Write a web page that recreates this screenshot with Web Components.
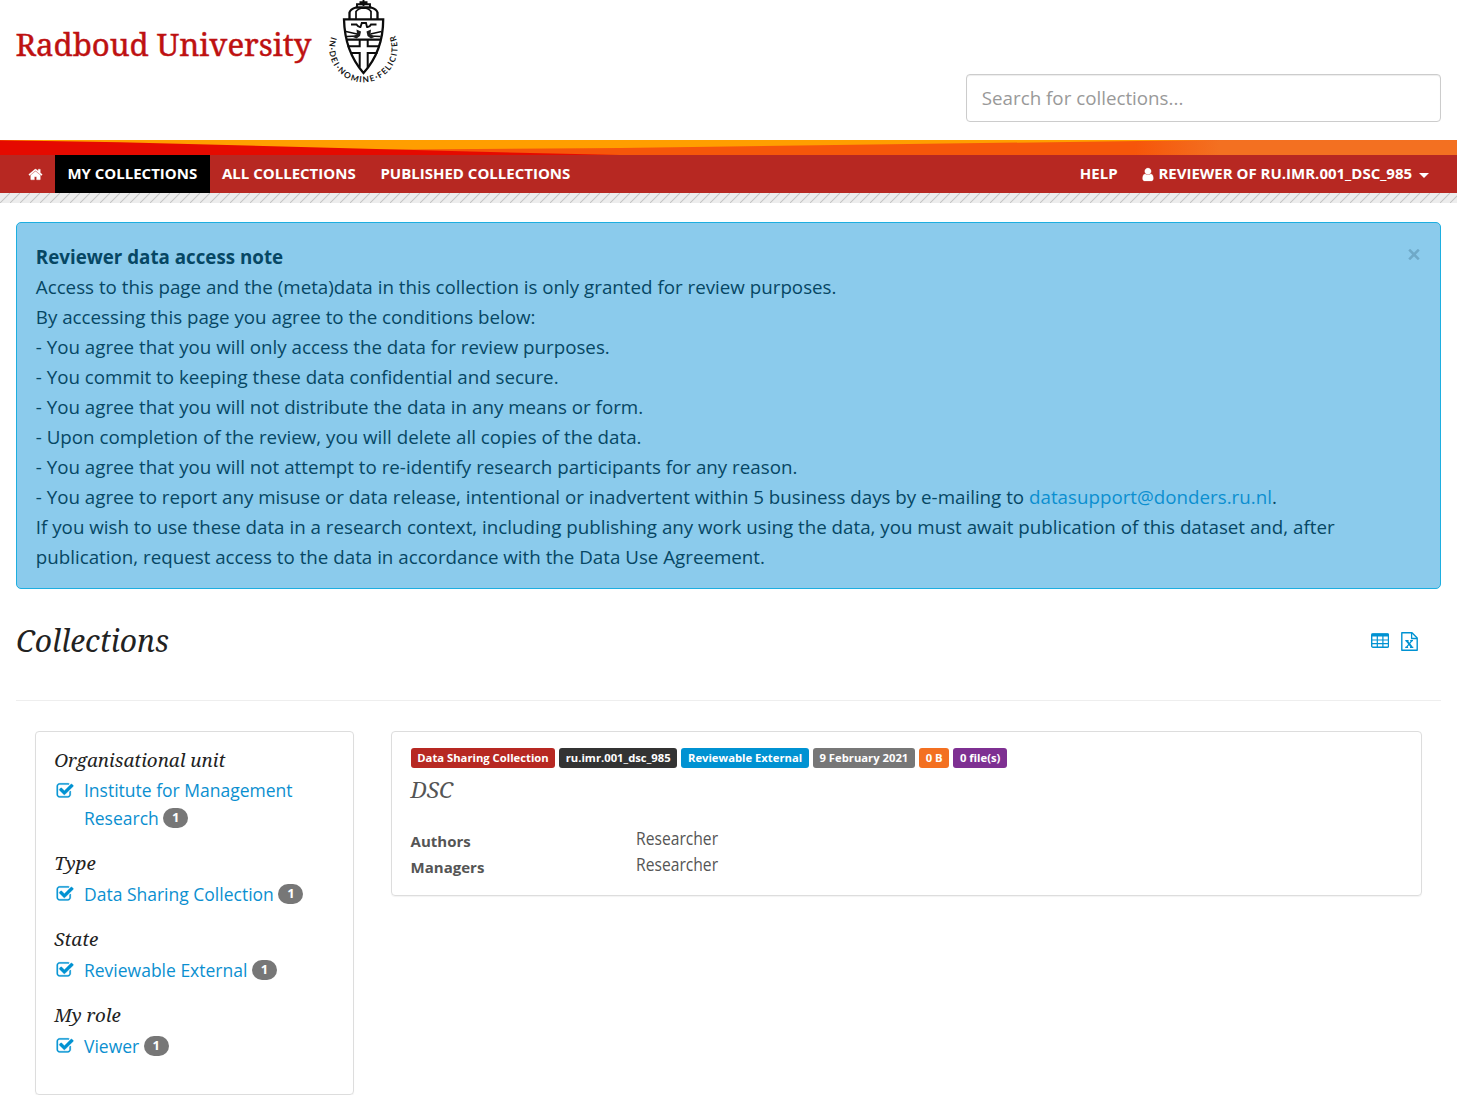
<!DOCTYPE html>
<html lang="en">
<head>
<meta charset="utf-8">
<title>Collections</title>
<style>
html,body{margin:0;padding:0;background:#fff}
body{font-family:"Open Sans","Noto Sans",sans-serif;font-size:18.75px;color:#222}
</style>
</head>
<body>
<page-shell>
  <site-header slot="header"></site-header>
  <site-nav slot="nav"></site-nav>
  <alert-box>
    <b>Reviewer data access note</b><br>
    Access to this page and the (meta)data in this collection is only granted for review purposes.<br>
    By accessing this page you agree to the conditions below:<br>
    - You agree that you will only access the data for review purposes.<br>
    - You commit to keeping these data confidential and secure.<br>
    - You agree that you will not distribute the data in any means or form.<br>
    - Upon completion of the review, you will delete all copies of the data.<br>
    - You agree that you will not attempt to re-identify research participants for any reason.<br>
    - You agree to report any misuse or data release, intentional or inadvertent within 5 business days by e-mailing to <span style="color:#0b8fd0">datasupport@donders.ru.nl</span>.<br>
    If you wish to use these data in a research context, including publishing any work using the data, you must await publication of this dataset and, after<br>
    publication, request access to the data in accordance with the Data Use Agreement.
  </alert-box>
  <page-heading>Collections</page-heading>
  <results-layout>
    <facet-panel slot="side">
      <facet-group name="Organisational unit" count="1">Institute for Management Research</facet-group>
      <facet-group name="Type" count="1">Data Sharing Collection</facet-group>
      <facet-group name="State" count="1">Reviewable External</facet-group>
      <facet-group name="My role" count="1">Viewer</facet-group>
    </facet-panel>
    <collection-card name="DSC">
      <tag-label slot="tags" style="--c:#b72822;--p:6.3px">Data Sharing Collection</tag-label>
      <tag-label slot="tags" style="--c:#333">ru.imr.001_dsc_985</tag-label>
      <tag-label slot="tags" style="--c:#0092d2">Reviewable External</tag-label>
      <tag-label slot="tags" style="--c:#777">9 February 2021</tag-label>
      <tag-label slot="tags" style="--c:#f37021">0 B</tag-label>
      <tag-label slot="tags" style="--c:#7e3092">0 file(s)</tag-label>
      <meta-row name="Authors">Researcher</meta-row>
      <meta-row name="Managers">Researcher</meta-row>
    </collection-card>
  </results-layout>
</page-shell>
<script>
const define = (name, html) => customElements.define(name, class extends HTMLElement {
  constructor() {
    super();
    this.attachShadow({mode: 'open'});
  }
  connectedCallback() {
    this.shadowRoot.innerHTML = typeof html === 'function' ? html(this) : html;
  }
});

const ICONS = {
  home: 'M1472 992v480q0 26-19 45t-45 19h-384v-384h-256v384h-384q-26 0-45-19t-19-45v-480q0-1 .5-3t.5-3l575-474 575 474q1 2 1 6zm223-69l-62 74q-8 9-21 11h-3q-13 0-21-7l-692-577-692 577q-12 8-24 7-13-2-21-11l-62-74q-8-10-7-23.5t11-21.5l719-599q32-26 76-26t76 26l244 204v-195q0-14 9-23t23-9h192q14 0 23 9t9 23v408l219 182q10 8 11 21.5t-7 23.5z',
  user: 'M1536 1399q0 109-62.5 187t-150.5 78h-854q-88 0-150.5-78t-62.5-187q0-85 8.5-160.5t31.5-152 58.5-131 94-89 134.5-34.5q131 128 313 128t313-128q76 0 134.5 34.5t94 89 58.5 131 31.5 152 8.5 160.5zm-256-887q0 159-112.5 271.5t-271.5 112.5-271.5-112.5-112.5-271.5 112.5-271.5 271.5-112.5 271.5 112.5 112.5 271.5z',
  check: 'M1472 930v318q0 119-84.5 203.5t-203.5 84.5h-832q-119 0-203.5-84.5t-84.5-203.5v-832q0-119 84.5-203.5t203.5-84.5h832q63 0 117 25 15 7 18 23 3 17-9 29l-49 49q-10 10-23 10-3 0-9-2-23-6-45-6h-832q-66 0-113 47t-47 113v832q0 66 47 113t113 47h832q66 0 113-47t47-113v-254q0-13 9-22l64-64q10-10 23-10 6 0 12 3 20 8 20 29zm231-489l-814 814q-24 24-57 24t-57-24l-430-430q-24-24-24-57t24-57l110-110q24-24 57-24t57 24l263 263 647-647q24-24 57-24t57 24l110 110q24 24 24 57t-24 57z'
};

define('fa-icon', el => `
<style>:host{display:inline-block;line-height:0}svg{display:block;width:100%;height:100%}</style>
<svg viewBox="${el.getAttribute('box') || '0 0 1792 1792'}" fill="currentColor" stroke="currentColor" stroke-width="30"><path d="${ICONS[el.getAttribute('name')]}"/></svg>`);

define('page-shell', `
<style>:host{display:block}main{padding:19px 16px 0}</style>
<slot name="header"></slot><slot name="nav"></slot><main><slot></slot></main>`);

define('site-logo', `
<style>
:host{display:flex;height:90px;padding-left:15.500px}
.name{width:304.500px;margin-top:21.500px;font:400 31.200px/44px "Noto Serif",serif;color:#be1111;-webkit-text-stroke:.450px #be1111;white-space:nowrap}
svg{display:block}
</style>
<div class="name">Radboud University</div>
<svg width="84" height="90" viewBox="320 0 84 90">
  <g fill="none" stroke="#0c0c0c" stroke-width="2.300">
    <path d="M344 19.3H383.200C383.200 40 378 57 363.500 73C349.500 57 344.500 40 344 19.3Z"/>
    <path d="M349.500 19V12.500Q350.500 9 356 7.500H371Q376.500 9 377.500 12.500V19"/>
    <path d="M356 19V11.500Q358 8.500 363.500 8Q369.500 8.500 371 11.500V19" stroke-width="1.700"/>
    <path d="M357 7.500V4.200H370V7.500M363.500 0V6M359.500 2.200H367.500" stroke-width="1.900"/>
    <path d="M346 39.700H381" stroke-width="2.200"/>
    <path d="M347.500 46.300H359.700V39.500M380 46.300H367.700V39.500" stroke-width="2"/>
    <path d="M350.500 53H359.700V67.500M377.500 53H367.700V67.500" stroke-width="2"/>
    <path d="M346 31.500L357 34M381.500 31.500L370.500 34M347 36.500L357 36M380.500 36.500L370 36" stroke-width="1.500"/>
    <path d="M351 24.500H356.500Q358.500 27.500 360.500 27L361.800 23H366L367 27Q369.500 27.500 371 24.500H376.500" stroke-width="1.900"/>
  </g>
  <path d="M356.500 29.500L361 31.500L360 36L356.500 38.500L353 37L357 34ZM371 29.500L366.500 31.500L367.500 36L371 38.500L374.500 37L370.500 34Z" fill="#1c1c1c"/>
  <path id="ring" d="M331.200 36.500A34.200 34.200 0 1 0 393.500 32" fill="none"/>
  <text font-family="Lato" font-size="8.300" font-weight="700" fill="#151515"><textPath href="#ring" textLength="132">IN·DEI·NOMINE·FELICITER</textPath></text>
</svg>`);

define('site-header', `
<style>
:host{display:flex;justify-content:space-between;align-items:flex-start;height:140px;padding-right:16px;box-sizing:border-box}
.search{box-sizing:border-box;width:475px;height:48px;margin-top:74px;padding:0 14.800px;border:1px solid #ccc;border-radius:4px;box-shadow:inset 0 1px 1px rgba(0,0,0,.075);color:#999;line-height:45px}
</style>
<site-logo></site-logo><div class="search">Search for collections...</div>`);

define('site-nav', `
<style>
:host{display:block}
.band{display:block;width:100%;height:15px}
nav{display:flex;height:38px;padding:0 15.500px 0 16px;background:#b72822;color:#fff;font-size:15px;font-weight:700;line-height:36px;white-space:nowrap}
span{box-sizing:border-box;padding:0 12.400px 2px;display:flex;align-items:center}
.on{background:#000}.gap{flex:1;padding:0}
.caret{border:5px solid transparent;border-top-color:#fff;border-bottom:0;margin:5px 0 0 7px}
.hatch{height:10px;background:#ededed linear-gradient(135deg,transparent 44%,#c6c6c6 48%,#c6c6c6 52%,transparent 56%) 0 0/10px 10px}
</style>
<svg class="band" viewBox="0 0 1457 15" preserveAspectRatio="none">
  <defs><linearGradient id="g" gradientUnits="userSpaceOnUse" x1="1135" x2="1220" y1="0" y2="0"><stop stop-color="#f6560a"/><stop offset="1" stop-color="#f37021"/></linearGradient></defs>
  <rect width="1457" height="15" fill="#ff9e00"/>
  <path d="M370 9.800L620 8L1210 0H1457V15H370Z" fill="url(#g)"/>
  <path d="M0 0.300L120 2.200L470 11.500L620 15H0Z" fill="#e50a00"/>
</svg>
<nav>
  <span><fa-icon name="home" style="width:15px;height:15px;margin:2px -.500px 0 -.300px"></fa-icon></span>
  <span class="on">MY COLLECTIONS</span><span>ALL COLLECTIONS</span><span>PUBLISHED COLLECTIONS</span>
  <span class="gap"></span><span>HELP</span>
  <span><fa-icon name="user" box="200 0 1400 1792" style="width:12px;height:15px;margin:2px 4px 0 0"></fa-icon>REVIEWER OF RU.IMR.001_DSC_985<i class="caret"></i></span>
</nav>
<div class="hatch"></div>`);

define('alert-box', `
<style>
:host{display:flex;justify-content:space-between;box-sizing:border-box;height:367px;padding:19px 20px 0 18.800px;border:1px solid #1daee0;border-radius:5px;background:#8bcbec;color:#064764;line-height:30px}
.text{white-space:nowrap}
svg{margin-top:7px;display:block}
</style>
<div class="text"><slot></slot></div>
<svg width="12" height="11" viewBox="0 0 12 11"><path d="M1.200 .700L10.800 10.300M10.800 .700L1.200 10.300" stroke="#6fa9c8" stroke-width="2.600"/></svg>`);

define('page-heading', `
<style>
:host{display:flex;justify-content:space-between;box-sizing:border-box;height:112px;padding:31px 23px 0 0;border-bottom:1px solid #eee}
h1{margin:0;font:italic 400 30px/42px "Noto Serif",serif;color:#222}
div{display:flex;gap:12px;color:#0092d2;padding-top:12px}
svg{display:block}
</style>
<h1><slot></slot></h1>
<div>
  <svg width="18" height="20" viewBox="0 0 18 20"><rect x=".7" y="2" width="16.800" height="13.200" rx="1.200" fill="none" stroke="currentColor" stroke-width="1.400"/><path d="M.5 3H17.500" stroke="currentColor" stroke-width="3"/><path d="M1 8H17.500M1 11.700H17.500M6.300 3V15M11.900 3V15" stroke="currentColor" stroke-width="1.200"/></svg>
  <svg width="17" height="20" viewBox="0 0 17 20"><path d="M.8.8H11L16.200 6V18.200H.8Z" fill="none" stroke="currentColor" stroke-width="1.400" stroke-linejoin="round"/><path d="M10.600 1V6.500H16" fill="none" stroke="currentColor" stroke-width="1.300"/><path d="M5.600 8.700L10.800 15.200" stroke="currentColor" stroke-width="1.900"/><path d="M11 8.700L5.500 15.200M4.300 8.600H7.600M9.200 8.600H12M4.200 15.300H7.100M9 15.300H12.300" stroke="currentColor" stroke-width="1.200"/></svg>
</div>`);

define('results-layout', `
<style>:host{display:flex;align-items:flex-start;gap:37px;padding:30px 19px 0}.main{flex:1}</style>
<slot name="side"></slot><div class="main"><slot></slot></div>`);

define('facet-panel', `
<style>:host{display:flex;flex-direction:column;gap:17px;box-sizing:border-box;width:319px;height:364px;padding:14px 18px;border:1px solid #ddd;border-radius:4px;box-shadow:0 1px 1px rgba(0,0,0,.05)}</style>
<slot></slot>`);

define('facet-group', el => `
<style>
:host{display:block}
h2{margin:0 0 4.200px;font:italic 400 18.750px/27.300px "Noto Serif",serif;color:#222;text-indent:.200px}
.row{display:flex;color:#0b8fd0;font-size:17.500px}
fa-icon{width:18px;height:18px;margin:4.500px 9.600px 0 2.400px;flex:none;color:#0092d2}
p{margin:0;max-width:225px;line-height:27.500px}
.badge{display:inline-block;box-sizing:border-box;min-width:25px;height:20px;border-radius:10px;background:#777;color:#fff;font-size:13px;font-weight:700;line-height:19.500px;text-align:center;vertical-align:2.500px}
</style>
<h2>${el.getAttribute('name')}</h2>
<div class="row"><fa-icon name="check"></fa-icon><p><slot></slot> <span class="badge">${el.getAttribute('count')}</span></p></div>`);

define('collection-card', el => `
<style>
:host{display:block;box-sizing:border-box;height:165px;padding:16px 19px;border:1px solid #ddd;border-radius:4px;box-shadow:0 1px 1px rgba(0,0,0,.05)}
.tags{display:flex;gap:4px}
h3{margin:6px 0 22px -.500px;font:italic 400 22.500px/32px "Noto Serif",serif;color:#555}
</style>
<div class="tags"><slot name="tags"></slot></div>
<h3>${el.getAttribute('name')}</h3>
<slot></slot>`);

define('tag-label', `
<style>:host{display:block;height:20px;padding:0 var(--p,6.700px);border-radius:3px;background:var(--c);color:#fff;font-size:11.250px;font-weight:700;line-height:20px;white-space:nowrap}</style><slot></slot>`);

define('meta-row', el => `
<style>
:host{display:flex;height:26px;line-height:26px;font-size:15px;color:#555;margin-left:-.400px}
b{width:225px}
span{display:inline-block;font-size:17.500px;line-height:21px;transform:scaleX(.894);transform-origin:0 0}
</style>
<b>${el.getAttribute('name')}</b><span><slot></slot></span>`);
</script>
</body>
</html>
